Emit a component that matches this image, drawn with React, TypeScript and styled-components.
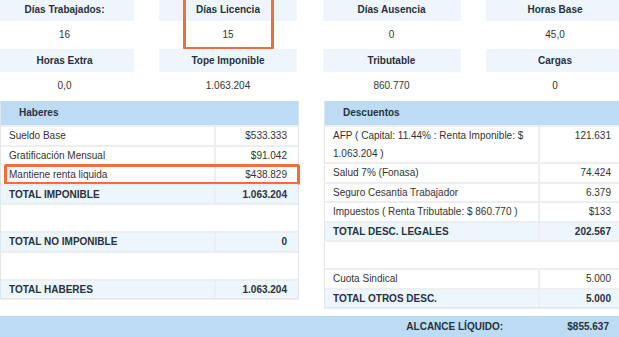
import styled, { createGlobalStyle } from "styled-components";
import type { FC, ReactNode } from "react";

const GlobalStyle = createGlobalStyle`
  html, body {
    margin: 0;
    padding: 0;
    background: #fff;
    overflow: hidden;
  }
  body {
    font-family: "Liberation Sans", Arial, sans-serif;
    font-size: 10px;
    color: #333;
  }
`;

const Page = styled.div`
  width: 619px;
  height: 337px;
  overflow: hidden;
`;

const StatsGrid = styled.div`
  display: grid;
  grid-template-columns: repeat(4, 138px);
  column-gap: 25.5px;
  margin: -2px 0 0 -4.5px;
`;

const StatCell = styled.div`
  position: relative;
  display: flex;
  flex-direction: column;
`;

const StatLabel = styled.div`
  height: 23px;
  line-height: 23px;
  background: #eef5fc;
  text-align: center;
  font-weight: bold;
  color: #28313d;
`;

const StatValue = styled.div`
  height: 27.5px;
  line-height: 27.5px;
  text-align: center;
`;

const Highlight = styled.div`
  position: absolute;
  border: 3px solid #f36c3e;
  border-radius: 2px;
  pointer-events: none;
`;

const CellHighlight = styled(Highlight)`
  left: 24px;
  top: -4px;
  width: 91px;
  height: 56px;
  box-sizing: border-box;
`;

const RowHighlight = styled(Highlight)`
  left: 3px;
  right: -2px;
  top: -2px;
  bottom: -1px;
`;

const Panels = styled.div`
  display: grid;
  grid-template-columns: 299px 299px;
  column-gap: 25px;
  align-items: start;
  margin-top: 2px;
`;

const Panel = styled.div`
  border: 1px solid #e2e6ea;
  border-top: none;
  box-shadow: 0 1px 1px rgba(0, 0, 0, 0.06);
  background: #fff;
`;

const PanelHeader = styled.div`
  height: 24px;
  line-height: 24px;
  padding-left: 18px;
  background: #bddcf3;
  font-weight: bold;
  color: #28313d;
`;

const Row = styled.div<{ $total?: boolean; $tall?: boolean }>`
  position: relative;
  display: grid;
  grid-template-columns: 215px 1fr;
  height: ${(p) => (p.$tall ? "37px" : "19.5px")};
  box-sizing: border-box;
  border-top: 2px solid #eceef1;
  background: ${(p) => (p.$total ? "#eef6fd" : "#fff")};
  font-weight: ${(p) => (p.$total ? "bold" : "normal")};
  color: ${(p) => (p.$total ? "#28313d" : "#333")};
  &:first-of-type {
    border-top: none;
  }
`;

const Label = styled.div<{ $tall?: boolean }>`
  padding: 0 8px;
  line-height: ${(p) => (p.$tall ? "18px" : "17px")};
  display: flex;
  align-items: ${(p) => (p.$tall ? "flex-start" : "center")};
  border-right: 2px solid #eceef1;
`;

const Amount = styled.div<{ $tall?: boolean }>`
  padding: 0 11px;
  line-height: ${(p) => (p.$tall ? "18px" : "17px")};
  display: flex;
  align-items: ${(p) => (p.$tall ? "flex-start" : "center")};
  justify-content: flex-end;
`;

const Spacer = styled.div<{ $h: number }>`
  height: ${(p) => p.$h}px;
  border-top: 2px solid #eceef1;
  box-sizing: border-box;
`;

const TotalBar = styled.div`
  display: grid;
  grid-template-columns: 1fr 80px;
  height: 22px;
  line-height: 22px;
  margin-top: 8px;
  background: #bddcf3;
  font-weight: bold;
  color: #28313d;
`;

const TotalLabel = styled.div`
  text-align: right;
  padding-right: 36px;
`;

const TotalValue = styled.div`
  text-align: right;
  padding-right: 10px;
`;

type Line =
  | { kind: "item"; label: ReactNode; amount: string; tall?: boolean; marked?: boolean }
  | { kind: "total"; label: string; amount: string }
  | { kind: "spacer"; h: number };

const stats = [
  { label: "Días Trabajados:", value: "16" },
  { label: "Días Licencia", value: "15", marked: true },
  { label: "Días Ausencia", value: "0" },
  { label: "Horas Base", value: "45,0" },
  { label: "Horas Extra", value: "0,0" },
  { label: "Tope Imponible", value: "1.063.204" },
  { label: "Tributable", value: "860.770" },
  { label: "Cargas", value: "0" },
];

const haberes: Line[] = [
  { kind: "item", label: "Sueldo Base", amount: "$533.333" },
  { kind: "item", label: "Gratificación Mensual", amount: "$91.042" },
  { kind: "item", label: "Mantiene renta liquida", amount: "$438.829", marked: true },
  { kind: "total", label: "TOTAL IMPONIBLE", amount: "1.063.204" },
  { kind: "spacer", h: 28 },
  { kind: "total", label: "TOTAL NO IMPONIBLE", amount: "0" },
  { kind: "spacer", h: 28 },
  { kind: "total", label: "TOTAL HABERES", amount: "1.063.204" },
];

const descuentos: Line[] = [
  {
    kind: "item",
    label: "AFP ( Capital: 11.44% : Renta Imponible: $ 1.063.204 )",
    amount: "121.631",
    tall: true,
  },
  { kind: "item", label: "Salud 7% (Fonasa)", amount: "74.424" },
  { kind: "item", label: "Seguro Cesantia Trabajador", amount: "6.379" },
  { kind: "item", label: "Impuestos ( Renta Tributable: $ 860.770 )", amount: "$133" },
  { kind: "total", label: "TOTAL DESC. LEGALES", amount: "202.567" },
  { kind: "spacer", h: 28 },
  { kind: "item", label: "Cuota Sindical", amount: "5.000" },
  { kind: "total", label: "TOTAL OTROS DESC.", amount: "5.000" },
];

const Section: FC<{ title: string; lines: Line[] }> = ({ title, lines }) => (
  <Panel>
    <PanelHeader>{title}</PanelHeader>
    {lines.map((l, i) => {
      if (l.kind === "spacer") return <Spacer key={i} $h={l.h} />;
      const tall = l.kind === "item" && l.tall;
      return (
        <Row key={i} $total={l.kind === "total"} $tall={tall}>
          <Label $tall={tall}>{l.label}</Label>
          <Amount $tall={tall}>{l.amount}</Amount>
          {l.kind === "item" && l.marked && <RowHighlight />}
        </Row>
      );
    })}
  </Panel>
);

export default function App() {
  return (
    <Page>
      <GlobalStyle />
      <StatsGrid>
        {stats.map((s) => (
          <StatCell key={s.label}>
            <StatLabel>{s.label}</StatLabel>
            <StatValue>{s.value}</StatValue>
            {s.marked && <CellHighlight />}
          </StatCell>
        ))}
      </StatsGrid>
      <Panels>
        <Section title="Haberes" lines={haberes} />
        <Section title="Descuentos" lines={descuentos} />
      </Panels>
      <TotalBar>
        <TotalLabel>ALCANCE LÍQUIDO:</TotalLabel>
        <TotalValue>$855.637</TotalValue>
      </TotalBar>
    </Page>
  );
}
